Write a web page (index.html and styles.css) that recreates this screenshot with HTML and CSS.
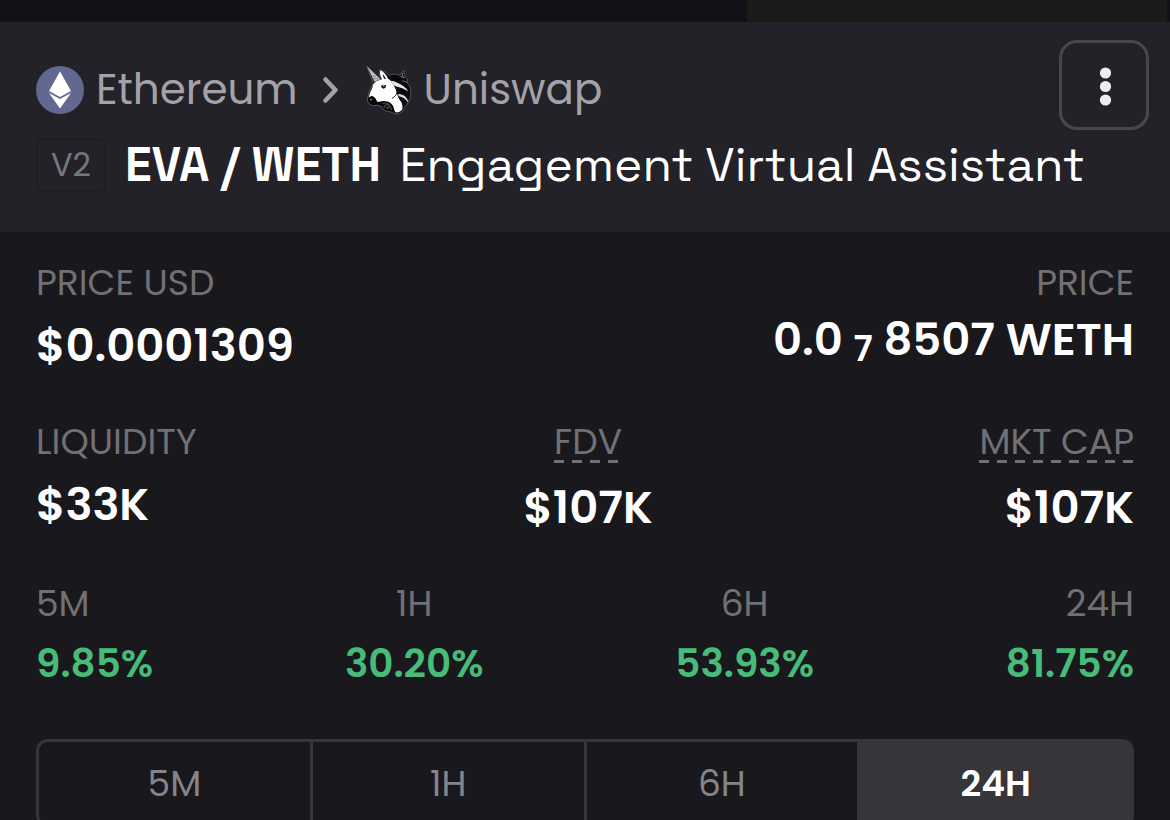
FILE: index.html
```html
<!DOCTYPE html>
<html lang="en">
<head>
    <meta charset="UTF-8">
    <meta name="viewport" content="width=device-width, initial-scale=1.0">
    <title>EVA / WETH</title>
    <link rel="stylesheet" href="styles.css">
</head>
<body>
    <div class="panel">
        <div class="top_strip"><div class="strip_block"></div></div>

        <header class="header">
            <div class="header_row">
                <nav class="breadcrumb">
                    <svg class="eth_icon" viewBox="0 0 48 48" aria-hidden="true">
                        <circle cx="24" cy="24" r="24" fill="#636890"/>
                        <path d="M24 5.500 35 25 24 31 13 25Z" fill="#fff"/>
                        <path d="M13 27 24 33 35 27 24 42.500Z" fill="#fff"/>
                    </svg>
                    <span class="chain">Ethereum</span>
                    <svg class="chevron" viewBox="0 0 20 28" aria-hidden="true">
                        <path d="M3.500 3.500 13.500 14 3.500 24.500" fill="none" stroke="#a3a2a8" stroke-width="4.500" stroke-linecap="round" stroke-linejoin="round"/>
                    </svg>
                    <svg class="uni_icon" viewBox="195 45 138 150" aria-hidden="true">
                        <path d="M236 60 Q252 62 264 76 Q282 68 297 76 L300 70 L309 62 L310 76 Q322 86 320 100 Q331 112 329 132 Q327 156 311 172 Q305 191 286 192 Q272 189 265 184 Q250 186 243 172 Q230 162 218 167 Q199 163 199 147 Q203 128 213 108 L216 96 Q206 72 198 49 Q222 70 238 88Z" fill="#09090b" stroke="#929198" stroke-width="1.500"/>
                        <path d="M199 50 220 95 238 88Z" fill="#c4c4c8"/>
                        <path d="M212 77 225 80 M216 86 232 86" stroke="#666" stroke-width="2"/>
                        <path d="M238 61 Q252 66 261 86 Q268 88 272 98 Q282 108 286 122 Q290 144 301 156 Q307 170 303 180 Q295 189 284 187 Q280 184 279 176 Q276 162 264 156 Q252 152 240 154 Q230 158 226 152 Q224 140 211 137 L203 143 Q206 128 214 113 Q216 98 228 93 L243 88 Q235 75 238 61Z" fill="#fff"/>
                        <path d="M245 72 Q252 78 255 87 L251 88 Q245 81 245 72Z" fill="#222127"/>
                        <path d="M240 108 Q246 101 255 106 Q256 115 247 116 Q241 115 240 108Z" fill="#111"/>
                        <circle cx="248" cy="107" r="2.500" fill="#ccc"/>
                        <path d="M201 147 Q209 137 221 144 L227 152 Q222 163 215 164 Q203 160 201 147Z" fill="#050506"/>
                        <circle cx="210" cy="149" r="2.500" fill="#999"/>
                        <path d="M268 92 Q280 92 290 99 Q310 106 322 124 Q304 113 284 109Q276 106 268 92Z" fill="#e6e6e8"/>
                        <path d="M291 132 Q308 132 316 143 Q322 150 322 158 Q310 142 293 139Z" fill="#d8d8db"/>
                        <path d="M288 122 Q288 138 273 145" fill="none" stroke="#222" stroke-width="3"/>
                        <path d="M298 79 312 84 M303 68 306 82 M304 92 318 97" fill="none" stroke="#77777e" stroke-width="3"/>
                        <path d="M250 174 Q247 164 258 164 Q268 168 262 175 Q256 176 257 170 M244 160 Q266 154 272 180" fill="none" stroke="#77777e" stroke-width="2"/>
                    </svg>
                    <span class="dex">Uniswap</span>
                </nav>
                <button class="menu_btn" type="button" aria-label="More options">
                    <svg class="dots" viewBox="0 0 14 42" aria-hidden="true">
                        <circle cx="8.500" cy="9" r="5.600"/>
                        <circle cx="8.500" cy="22.500" r="5.600"/>
                        <circle cx="8.500" cy="36" r="5.600"/>
                    </svg>
                </button>
            </div>
            <div class="title_row">
                <span class="version">V2</span>
                <h1 class="title"><b class="pair">EVA / WETH</b> <span class="token_name">Engagement Virtual Assistant</span></h1>
            </div>
        </header>

        <main class="content">
            <div class="stats">
                <div class="stat">
                    <div class="label">PRICE USD</div>
                    <div class="value">$0.0001309</div>
                </div>
                <div class="stat end">
                    <div class="label">PRICE</div>
                    <div class="value native">0.0 <sub>7</sub> 8507 WETH</div>
                </div>
            </div>

            <div class="stats">
                <div class="stat">
                    <div class="label">LIQUIDITY</div>
                    <div class="value">$33K</div>
                </div>
                <div class="stat middle">
                    <div class="label hint">FDV</div>
                    <div class="value">$107K</div>
                </div>
                <div class="stat end">
                    <div class="label hint">MKT CAP</div>
                    <div class="value">$107K</div>
                </div>
            </div>

            <div class="stats">
                <div class="stat">
                    <div class="label">5M</div>
                    <div class="change">9.85%</div>
                </div>
                <div class="stat middle">
                    <div class="label">1H</div>
                    <div class="change">30.20%</div>
                </div>
                <div class="stat middle">
                    <div class="label">6H</div>
                    <div class="change">53.93%</div>
                </div>
                <div class="stat end">
                    <div class="label">24H</div>
                    <div class="change">81.75%</div>
                </div>
            </div>

            <div class="tabs">
                <button class="tab" type="button">5M</button>
                <button class="tab" type="button">1H</button>
                <button class="tab" type="button">6H</button>
                <button class="tab active" type="button">24H</button>
            </div>
        </main>
    </div>
</body>
</html>
```
FILE: styles.css
```css
* {
    margin: 0;
    padding: 0;
    box-sizing: border-box;
}

body {
    background-color: #19181d;
    color: white;
    font-family: Poppins, Inter, sans-serif;
}

.panel {
    height: 100vh;
    overflow: hidden;
}

.top_strip {
    height: 22px;
    background-color: #121117;
    display: flex;
    justify-content: flex-end;
    padding-right: 3px;
}

.strip_block {
    width: 36%;
    background-color: #1b1b1a;
}

.header {
    background-color: #232228;
    padding: 18px 21px 40px 36px;
}

.header_row {
    display: flex;
    justify-content: space-between;
    align-items: center;
}

.breadcrumb {
    display: flex;
    align-items: center;
    padding-top: 10px;
    font-size: 42px;
    line-height: 52px;
    color: #a3a2a8;
}

.eth_icon {
    width: 48px;
    height: 48px;
    margin-right: 12px;
}

.chevron {
    width: 20px;
    height: 28px;
    margin: 0 24px;
}

.uni_icon {
    width: 46px;
    height: 50px;
    margin-right: 12px;
}

.menu_btn {
    width: 90px;
    height: 90px;
    display: flex;
    justify-content: center;
    align-items: center;
    background: none;
    border: 3px solid #48474c;
    border-radius: 18px;
    cursor: pointer;
}

.dots {
    width: 14px;
    height: 42px;
    fill: #ededf0;
}

.title_row {
    display: flex;
    align-items: center;
    margin-top: 8px;
}

.version {
    width: 70px;
    height: 54px;
    display: flex;
    justify-content: center;
    align-items: center;
    border: 2px solid #1f1f20;
    border-radius: 6px;
    color: #77777a;
    font-size: 32px;
    margin-right: 19px;
}

.title {
    font-family: "Space Grotesk", Inter, sans-serif;
    font-size: 48px;
    line-height: 54px;
    font-weight: 400;
    white-space: nowrap;
}

.pair {
    font-weight: 700;
    margin-right: 6px;
}

.content {
    padding: 29px 36px 0;
}

.stats {
    display: flex;
    justify-content: space-between;
    margin-bottom: 42px;
}

.stat {
    display: flex;
    flex-direction: column;
    align-items: flex-start;
}

.middle {
    align-items: center;
}

.end {
    align-items: flex-end;
}

.label {
    font-size: 36px;
    line-height: 44px;
    margin-bottom: 9px;
    color: #717074;
}

.hint {
    padding-bottom: 3px;
    background: repeating-linear-gradient(90deg, #717074 0 10px, transparent 10px 18px) left 40px / 100% 3px no-repeat;
}

.value {
    font-size: 45px;
    line-height: 64px;
    font-weight: 600;
}

.native {
    line-height: 52px;
}

.native sub {
    font-size: 35px;
    line-height: 0;
    vertical-align: -6px;
}

.change {
    font-size: 39px;
    line-height: 58px;
    font-weight: 600;
    color: #48bb78;
}

.tabs {
    display: flex;
    margin-top: 46px;
}

.tab {
    flex: 1;
    box-sizing: content-box;
    height: 82px;
    background: none;
    border: 3px solid #363539;
    border-right: none;
    color: #858489;
    font-family: inherit;
    font-size: 36px;
    cursor: pointer;
}

.tab:first-child {
    border-radius: 12px 0 0 12px;
}

.tab:last-child {
    border-right: 3px solid #363539;
    border-radius: 0 12px 12px 0;
}

.active {
    background-color: #363539;
    color: white;
    font-weight: 600;
}
```
